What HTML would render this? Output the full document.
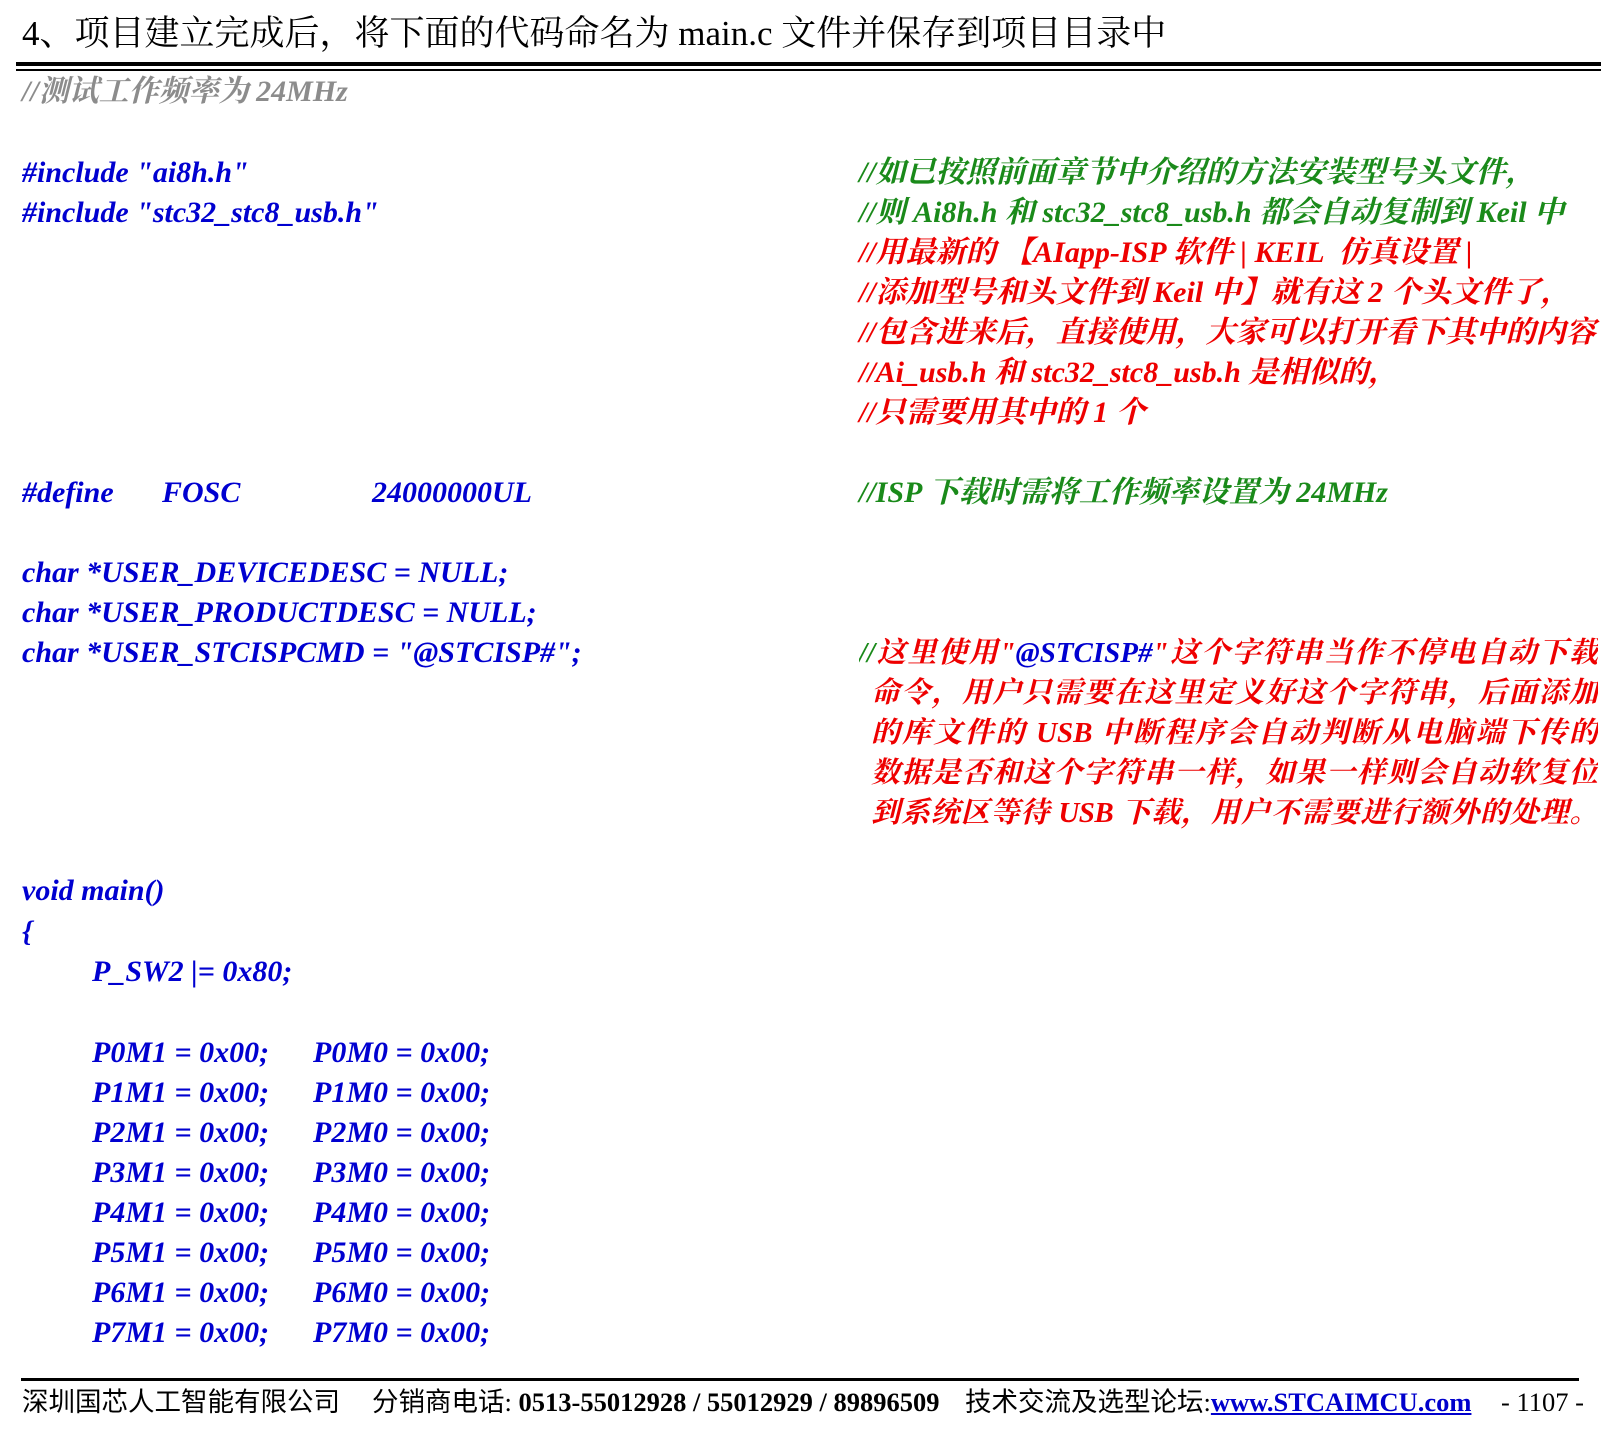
<!DOCTYPE html>
<html><head><meta charset="utf-8"><style>
body{margin:0;width:1611px;height:1434px;background:#fff;position:relative;overflow:hidden;font-family:"Liberation Serif","Noto Serif CJK SC","Noto Sans CJK SC",serif}
.l{position:absolute;white-space:pre;height:40px;line-height:40px;font-size:30px;font-weight:bold;font-style:italic}
.b{color:#0000d0}.g{color:#1a8a1a}.r{color:#ee0000}.gr{color:#8c8c8c}
.j{text-align:justify;text-align-last:justify;white-space:normal;right:13px;font-size:29px;overflow:hidden}
.f{position:absolute;top:1385px;font-size:26.5px;line-height:34px;white-space:pre;font-family:"Liberation Serif","Noto Sans CJK SC",serif}
</style></head><body>
<div style="position:absolute;left:22px;top:13px;font-size:35px;line-height:42px;white-space:pre;font-family:'Liberation Serif','Noto Serif CJK SC',serif">4、项目建立完成后，将下面的代码命名为 main.c 文件并保存到项目目录中</div>
<div style="position:absolute;left:16px;width:1585px;top:62px;height:4px;background:#000"></div>
<div style="position:absolute;left:16px;width:1585px;top:69px;height:2px;background:#000"></div>
<div class="l gr" style="left:22px;top:72px">//测试工作频率为 24MHz</div>
<div class="l b" style="left:22px;top:153px">#include "ai8h.h"</div>
<div class="l b" style="left:22px;top:193px">#include "stc32_stc8_usb.h"</div>
<div class="l g" style="left:859px;top:153px">//如已按照前面章节中介绍的方法安装型号头文件，</div>
<div class="l g" style="left:859px;top:193px">//则 Ai8h.h 和 stc32_stc8_usb.h 都会自动复制到 Keil 中</div>
<div class="l r" style="left:859px;top:233px">//用最新的 【AIapp-ISP 软件 | KEIL  仿真设置 |</div>
<div class="l r" style="left:859px;top:273px">//添加型号和头文件到 Keil 中】就有这 2 个头文件了，</div>
<div class="l r" style="left:859px;top:313px">//包含进来后，直接使用，大家可以打开看下其中的内容</div>
<div class="l r" style="left:859px;top:353px">//Ai_usb.h 和 stc32_stc8_usb.h 是相似的，</div>
<div class="l r" style="left:859px;top:393px">//只需要用其中的 1 个</div>
<div class="l b" style="left:22px;top:473px">#define</div>
<div class="l b" style="left:162px;top:473px">FOSC</div>
<div class="l b" style="left:372px;top:473px">24000000UL</div>
<div class="l g" style="left:859px;top:473px">//ISP 下载时需将工作频率设置为 24MHz</div>
<div class="l b" style="left:22px;top:553px">char *USER_DEVICEDESC = NULL;</div>
<div class="l b" style="left:22px;top:593px">char *USER_PRODUCTDESC = NULL;</div>
<div class="l b" style="left:22px;top:633px">char *USER_STCISPCMD = "@STCISP#";</div>
<div class="l r j" style="left:859px;top:633px"><span class="g">//</span>这里使用"<span class="b">@STCISP#</span>"这个字符串当作不停电自动下载</div>
<div class="l r j" style="left:871px;top:673px">命令，用户只需要在这里定义好这个字符串，后面添加</div>
<div class="l r j" style="left:871px;top:713px">的库文件的 USB 中断程序会自动判断从电脑端下传的</div>
<div class="l r j" style="left:871px;top:753px">数据是否和这个字符串一样，如果一样则会自动软复位</div>
<div class="l r j" style="left:871px;top:793px;letter-spacing:-0.5px">到系统区等待 USB 下载，用户不需要进行额外的处理。</div>
<div class="l b" style="left:22px;top:871px">void main()</div>
<div class="l b" style="left:22px;top:912px">{</div>
<div class="l b" style="left:92px;top:952px">P_SW2 |= 0x80;</div>
<div class="l b" style="left:92px;top:1033px">P0M1 = 0x00;</div><div class="l b" style="left:313px;top:1033px">P0M0 = 0x00;</div>
<div class="l b" style="left:92px;top:1073px">P1M1 = 0x00;</div><div class="l b" style="left:313px;top:1073px">P1M0 = 0x00;</div>
<div class="l b" style="left:92px;top:1113px">P2M1 = 0x00;</div><div class="l b" style="left:313px;top:1113px">P2M0 = 0x00;</div>
<div class="l b" style="left:92px;top:1153px">P3M1 = 0x00;</div><div class="l b" style="left:313px;top:1153px">P3M0 = 0x00;</div>
<div class="l b" style="left:92px;top:1193px">P4M1 = 0x00;</div><div class="l b" style="left:313px;top:1193px">P4M0 = 0x00;</div>
<div class="l b" style="left:92px;top:1233px">P5M1 = 0x00;</div><div class="l b" style="left:313px;top:1233px">P5M0 = 0x00;</div>
<div class="l b" style="left:92px;top:1273px">P6M1 = 0x00;</div><div class="l b" style="left:313px;top:1273px">P6M0 = 0x00;</div>
<div class="l b" style="left:92px;top:1313px">P7M1 = 0x00;</div><div class="l b" style="left:313px;top:1313px">P7M0 = 0x00;</div>
<div style="position:absolute;left:21px;width:1558px;top:1378px;height:3px;background:#000"></div>
<div class="f" style="left:22px">深圳国芯人工智能有限公司</div>
<div class="f" style="left:372px">分销商电话: <b>0513-55012928 / 55012929 / 89896509</b></div>
<div class="f" style="left:965px">技术交流及选型论坛:<b style="color:#0000cc;text-decoration:underline">www.STCAIMCU.com</b></div>
<div class="f" style="left:1501px">- 1107 -</div>
</body></html>
